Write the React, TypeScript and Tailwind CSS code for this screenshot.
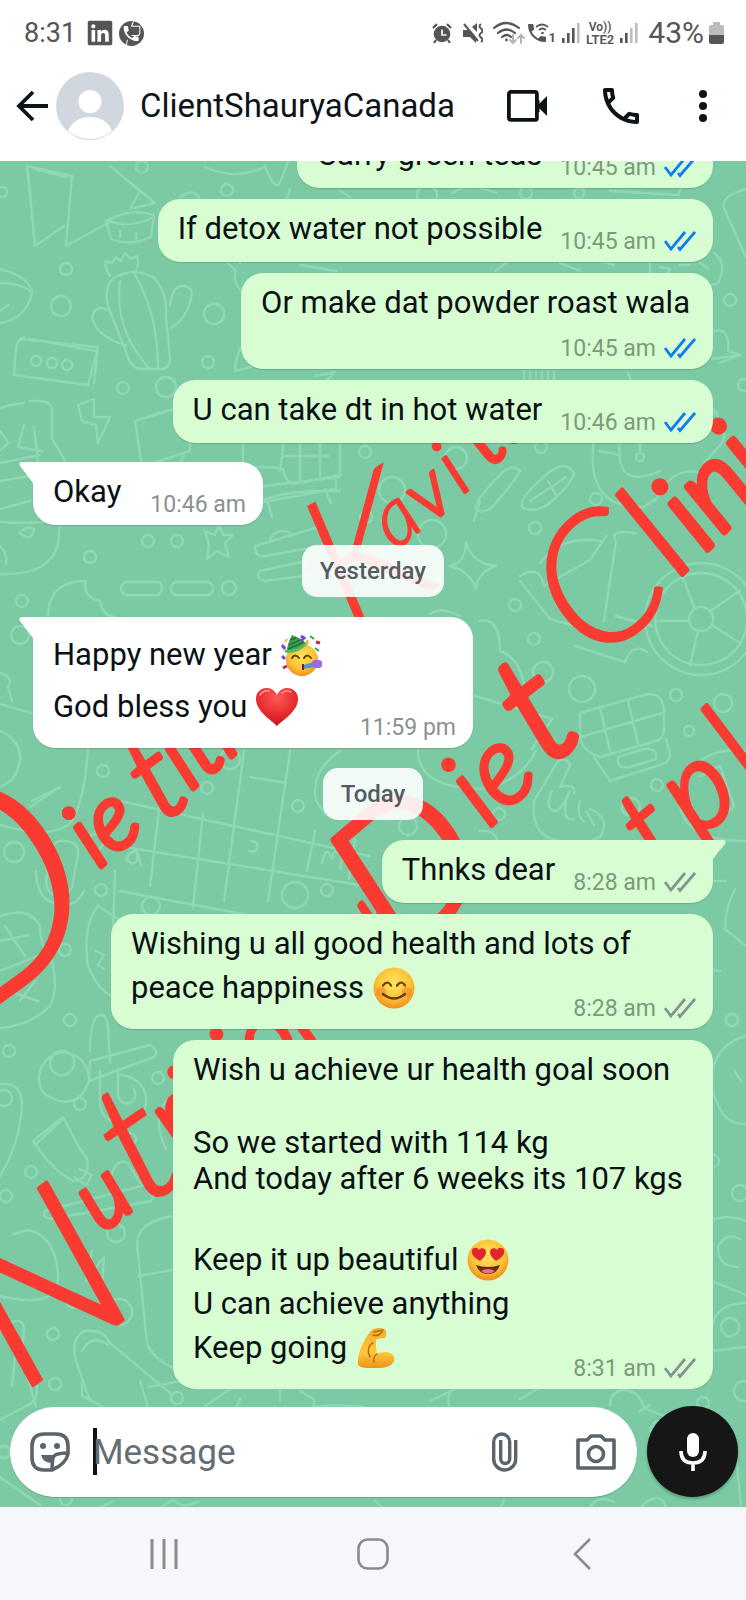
import React from "react";
import { FaLinkedin } from "react-icons/fa";

const PHONE =
  "M6.54 5c.06.89.21 1.76.45 2.59l-1.2 1.2c-.41-1.2-.67-2.47-.76-3.79h1.51m9.86 12.02c.85.24 1.72.39 2.6.45v1.49c-1.32-.09-2.59-.35-3.8-.75l1.2-1.19M7.5 3H4c-.55 0-1 .45-1 1 0 9.39 7.61 17 17 17 .55 0 1-.45 1-1v-3.49c0-.55-.45-1-1-1-1.24 0-2.45-.2-3.57-.57a.84.84 0 0 0-.31-.05c-.26 0-.51.1-.71.29l-2.2 2.2a15.149 15.149 0 0 1-6.59-6.59l2.2-2.2c.28-.28.36-.67.25-1.02A11.36 11.36 0 0 1 8.5 4c0-.55-.45-1-1-1z";
const PHONE_SOLID =
  "M6.6 10.8c1.4 2.8 3.8 5.1 6.6 6.6l2.2-2.2c.3-.3.7-.4 1-.2 1.1.4 2.3.6 3.6.6.6 0 1 .4 1 1V20c0 .6-.4 1-1 1C10.600 21 3 13.400 3 4c0-.6.4-1 1-1h3.500c.6 0 1 .4 1 1 0 1.200.2 2.400.6 3.600.1.3 0 .7-.2 1z";

type EmojiName = "party" | "heart" | "smile" | "hearteyes" | "muscle";

function FaceBase({ id }: { id: string }) {
  return (
    <>
      <defs>
        <radialGradient id={id} cx="50%" cy="38%" r="62%">
          <stop offset="0" stopColor="#ffe45e" />
          <stop offset="0.65" stopColor="#fdc236" />
          <stop offset="1" stopColor="#ef8d1c" />
        </radialGradient>
      </defs>
      <circle cx="21" cy="21" r="20.500" fill={`url(#${id})`} />
    </>
  );
}

function Emoji({ name }: { name: EmojiName }) {
  const common = "h-[42px] w-[42px] shrink-0";
  if (name === "party")
    return (
      <svg viewBox="0 0 42 42" className={common} role="img" aria-label="🥳">
        <defs>
          <radialGradient id="pf" cx="50%" cy="38%" r="62%">
            <stop offset="0" stopColor="#ffe45e" />
            <stop offset="0.65" stopColor="#fdc236" />
            <stop offset="1" stopColor="#ef8d1c" />
          </radialGradient>
        </defs>
        <circle cx="21" cy="26" r="16" fill="url(#pf)" />
        <path d="M11 1C9 5 6 11 6 17c6 2 14-2 20-7C22 6 17 3 11 1z" fill="#3f9f4c" />
        <path d="M9 6l6-2M8 11l11-5M7 15l16-7" stroke="#1f7434" strokeWidth="1.500" />
        <path d="M5 17c6 2 15-2 21-8" fill="none" stroke="#58bd5b" strokeWidth="3" strokeLinecap="round" />
        <path d="M11 24q3-5 7 0M23 24q3-5 7 0" fill="none" stroke="#6b3a12" strokeWidth="2" strokeLinecap="round" />
        <path d="M22 31l11-3v5l-10 2z" fill="#5a8fd8" />
        <rect x="31" y="26" width="10" height="8" rx="3" fill="#9b6be0" />
        <path d="M22 30v6" stroke="#5c2b10" strokeWidth="2" />
        <path d="M20 2l3 2-3 3M1 11l3 4M1 22l3 3" stroke="#7447d0" strokeWidth="3" fill="none" />
        <path d="M35 8l4 1M2 34l4-2" stroke="#d3214f" strokeWidth="3" />
        <path d="M29 2l4 3M34 14l4 3" stroke="#3ba04f" strokeWidth="2" />
        <path d="M27 6l-2 4M6 5l-2 3" stroke="#f1b52c" strokeWidth="2" />
      </svg>
    );
  if (name === "heart")
    return (
      <svg viewBox="0 0 42 42" className={common} role="img" aria-label="❤️">
        <defs>
          <radialGradient id="hh" cx="50%" cy="25%" r="75%">
            <stop offset="0" stopColor="#fb5a55" />
            <stop offset="0.6" stopColor="#e82c30" />
            <stop offset="1" stopColor="#c5131c" />
          </radialGradient>
        </defs>
        <path d="M21 40C15 34 0 25 0 13 0 6 5 2 11 2c5 0 8 3 10 7 2-4 5-7 10-7 6 0 11 4 11 11 0 12-15 21-21 27z" fill="url(#hh)" />
        <path d="M4 9q3-5 9-4M26 7q4-4 9-1" fill="none" stroke="#ff9a92" strokeWidth="1.500" strokeLinecap="round" />
      </svg>
    );
  if (name === "smile")
    return (
      <svg viewBox="0 0 42 42" className={common} role="img" aria-label="😊">
        <FaceBase id="sf" />
        <circle cx="8" cy="25" r="5" fill="#f4702a" opacity="0.45" />
        <circle cx="34" cy="25" r="5" fill="#f4702a" opacity="0.45" />
        <path d="M10 18.500q4.500-6 8 0M24 18.500q4.500-6 8 0" fill="none" stroke="#6b3a12" strokeWidth="2.200" strokeLinecap="round" />
        <path d="M10 27q11 9 22 0" fill="none" stroke="#6b3a12" strokeWidth="2.400" strokeLinecap="round" />
      </svg>
    );
  if (name === "hearteyes")
    return (
      <svg viewBox="0 0 42 42" className={common} role="img" aria-label="😍">
        <FaceBase id="he" />
        <path d="M13 22C8 19 4 16 5 11c1-3 6-3 7 0 2-3 7-2 7 2 0 4-3 6-6 9zM29 22c5-3 9-6 8-11-1-3-6-3-7 0-2-3-7-2-7 2 0 4 3 6 6 9z" fill="#e3242f" />
        <path d="M9 26q12 4 24 0-3 9-12 9T9 26z" fill="#6a2a12" />
        <path d="M14 32q7-4 14 0-7 5-14 0z" fill="#ef6d8c" />
      </svg>
    );
  return (
    <svg viewBox="0 0 42 42" className={common} role="img" aria-label="💪">
      <defs>
        <linearGradient id="ms" x1="0" y1="0" x2="0" y2="1">
          <stop offset="0" stopColor="#f2ac2a" />
          <stop offset="0.6" stopColor="#ffc93c" />
          <stop offset="1" stopColor="#ea9418" />
        </linearGradient>
      </defs>
      <path
        d="M14 5C17 1 23 0 28 2c3 1 3 6 1 9l-8 1c-2 2-1 8 0 15 5-3 15-3 17 3 2 7-6 11-15 11C14 41 6 42 2 38 1 27 7 14 14 5z"
        fill="url(#ms)"
      />
      <path d="M17 8q5 2 9-3M18 5l9-2M14 30c-3-5-2-12 3-14M21 27c-3 2-4 5-3 8" fill="none" stroke="#b56c10" strokeWidth="1.500" strokeLinecap="round" />
    </svg>
  );
}

function Ticks({ read }: { read: boolean }) {
  return (
    <svg
      viewBox="0 0 32 22"
      className={read ? "h-[22px] w-8 text-[#0f7df0]" : "h-[22px] w-8 text-[#86948f]"}
      fill="none"
      stroke="currentColor"
      strokeWidth="2.800"
      role="img"
      aria-label={read ? "Read" : "Delivered"}
    >
      <path d="M1 10l6 8L21 1M14 16l2 2.500L31 1" />
    </svg>
  );
}

type Line = { text: string; emoji?: EmojiName };
type Message = {
  id: number;
  lines: Line[];
  time: string;
  mine: boolean;
  read?: boolean;
  tail?: boolean;
  layout: "inline" | "below" | "overlap";
  box?: string;
};

function Bubble({ m }: { m: Message }) {
  const layout =
    m.layout === "inline"
      ? "flex items-end justify-between gap-[18px]"
      : m.layout === "below"
        ? "flex flex-col"
        : "grid";
  const text = m.layout === "overlap" ? "col-start-1 row-start-1 pr-3" : m.layout === "below" ? "pr-[6px]" : "";
  const meta =
    m.layout === "overlap"
      ? "col-start-1 row-start-1 self-end justify-self-end -mb-2"
      : m.layout === "below"
        ? "self-end mt-[14px] -mb-2"
        : "-mb-2";
  const side = m.mine ? "self-end bg-[#d8fdd2]" : "self-start bg-white";
  const corner = m.tail ? (m.mine ? "rounded-[22px] rounded-tr-none" : "rounded-[22px] rounded-tl-none") : "rounded-[22px]";
  return (
    <article
      className={`relative max-w-full pt-3 pb-[15px] pl-5 pr-[17px] shadow-[0_1px_1px_rgba(0,0,0,0.15)] ${side} ${corner} ${layout} ${m.box ?? ""}`}
    >
      {m.tail && !m.mine && (
        <svg viewBox="0 0 16 24" className="absolute top-0 -left-[14px] h-6 w-4" aria-hidden="true">
          <path d="M16 0H3Q-1 0 1 4L14 21V24H16z" fill="#fff" />
        </svg>
      )}
      {m.tail && m.mine && (
        <svg viewBox="0 0 16 24" className="absolute top-0 -right-[13px] h-6 w-4" aria-hidden="true">
          <path d="M0 0h13q4 0 2 4L3 19V24H0z" fill="#d8fdd2" />
        </svg>
      )}
      <div className={`text-[31px] leading-9 text-[#0a1014] ${text}`}>
        {m.lines.map((l, i) =>
          l.emoji ? (
            <p key={i} className="flex h-[52px] items-center gap-[9px] whitespace-nowrap">
              {l.text}
              <Emoji name={l.emoji} />
            </p>
          ) : (
            <p key={i} className={l.text ? "min-h-9" : "min-h-[37px]"}>
              {l.text}
            </p>
          ),
        )}
      </div>
      <div
        className={`flex shrink-0 items-center gap-2 text-[23px] leading-[27px] ${meta} ${m.mine ? "text-[#7b9a7c]" : "text-[#8b9093]"}`}
      >
        <time>{m.time}</time>
        {m.mine && <Ticks read={!!m.read} />}
      </div>
    </article>
  );
}

function Day({ children }: { children: React.ReactNode }) {
  return (
    <div className="my-[9px] self-center rounded-[15px] bg-white/90 px-[18px] py-3 text-[24px] leading-7 font-medium text-[#545b61]">
      {children}
    </div>
  );
}

const earlier: Message[] = [
  { id: 1, lines: [{ text: "Carry green teas" }], time: "10:45 am", mine: true, read: true, layout: "inline" },
  { id: 2, lines: [{ text: "If detox water not possible" }], time: "10:45 am", mine: true, read: true, layout: "inline" },
  { id: 3, lines: [{ text: "Or make dat powder roast wala" }], time: "10:45 am", mine: true, read: true, layout: "below" },
  { id: 4, lines: [{ text: "U can take dt in hot water" }], time: "10:46 am", mine: true, read: true, layout: "inline" },
  { id: 5, lines: [{ text: "Okay" }], time: "10:46 am", mine: false, tail: true, layout: "inline", box: "mt-2 w-[230px]" },
];
const yesterday: Message[] = [
  {
    id: 6,
    lines: [
      { text: "Happy new year", emoji: "party" },
      { text: "God bless you", emoji: "heart" },
    ],
    time: "11:59 pm",
    mine: false,
    tail: true,
    layout: "overlap",
    box: "w-[440px]",
  },
];
const today: Message[] = [
  { id: 7, lines: [{ text: "Thnks dear" }], time: "8:28 am", mine: true, tail: true, layout: "inline" },
  {
    id: 8,
    lines: [{ text: "Wishing u all good health and lots of" }, { text: "peace happiness", emoji: "smile" }],
    time: "8:28 am",
    mine: true,
    layout: "overlap",
    box: "w-[602px]",
  },
  {
    id: 9,
    lines: [
      { text: "Wish u achieve ur health goal soon" },
      { text: "" },
      { text: "So we started with 114 kg" },
      { text: "And today after 6 weeks its 107 kgs" },
      { text: "" },
      { text: "Keep it up beautiful", emoji: "hearteyes" },
      { text: "U can achieve anything" },
      { text: "Keep going", emoji: "muscle" },
    ],
    time: "8:31 am",
    mine: true,
    layout: "overlap",
    box: "w-[540px]",
  },
];

const dots: [number, number, number][] = [
  [142, 166, 6], [2, 191, 5], [227, 189, 6], [66, 268, 6], [61, 305, 10], [214, 313, 10], [208, 361, 6], [123, 387, 6],
  [166, 386, 10], [365, 451, 6], [366, 516, 6], [427, 194, 10], [526, 192, 6], [579, 192, 5], [730, 299, 6], [744, 384, 6],
  [541, 446, 6], [456, 457, 11], [392, 489, 13], [535, 527, 6], [432, 533, 14], [596, 498, 6], [148, 540, 6], [177, 540, 6],
  [90, 556, 6], [22, 600, 6], [229, 587, 7], [20, 634, 9], [515, 604, 6], [534, 638, 6], [543, 671, 10], [582, 688, 13],
  [676, 694, 6], [723, 702, 9], [689, 730, 5], [657, 784, 6], [631, 806, 9], [499, 813, 6], [230, 758, 10], [103, 770, 6],
  [207, 787, 6], [298, 805, 6], [14, 851, 10], [95, 841, 8], [101, 889, 6], [295, 894, 13], [327, 889, 6], [151, 905, 9],
  [408, 825, 9], [65, 949, 6], [70, 1019, 6], [9, 1050, 6], [158, 1077, 6], [4, 1097, 8], [80, 1103, 6], [130, 1138, 6],
  [31, 1171, 6], [6, 1195, 6], [116, 1232, 9], [73, 1301, 6], [119, 1311, 13], [53, 1333, 6], [732, 1019, 6], [713, 1160, 6],
  [740, 1192, 8], [55, 1383, 6], [177, 1397, 6], [703, 1402, 6], [66, 1498, 6], [4, 1451, 6], [744, 1390, 10],
];

const doodles = [
  "M27 165L35 245 64 225M27 165L72 175 66 245 108 222M35 168L66 176M110 165L155 202 130 208 140 190 110 165M35 245L28 170",
  "M106 220q25-14 48-6l-3 22q-20 10-40 2zM108 220q22 8 46-4M120 236v-6M136 238v-6",
  "M110 275q-6-8-4-15l6 2 4-6 5 4 4-8 6 6 6-3q3 10-3 17M142 368q-10 0-14-12L108 305q-4-20 6-28 20-12 40 0 14 14 12 40l4 40q0 10-8 11zM120 280q-6 50 30 88M134 272q24 40 24 95M170 305q2-20 12-20 12 0 9 12-4 20-20 30M126 344q-30-8-34-28 4-14 18-6",
  "M0 268q30 8 32 24-6 26-32 30M0 282q20 0 30 8M0 310l8-6",
  "M20 338l78 8-10 38-74-10 2-28q2-8 8-10M98 346l-4 36M30 338l66 12",
  "M78 404l16-6 0 18 16 0-12 26-2-18-14-4z",
  "M0 407q12-4 24-5M30 400q20-2 22 8v30q10 14 16 30M0 430q8 10 8 12L0 450M24 424l-6 22 24 4M34 426l4 34M0 462l40-8M0 480l35-6M0 508l30-8",
  "M135 420l45-14q6 0 10 10v34l-48 16zM184 455l-8 12",
  "M243 442v26q20-4 40 0 4 18 16 14l42-8M280 470l4-30M300 440v40M320 440v35M284 455h44M340 442v34l-84 10v16l80-14v-12M260 500q30-12 80-10M268 502l4 14M325 488l6 14",
  "M0 521q60 4 72-10M0 573q50 2 58-30 2-20 2-26M20 532q6-8 14-4-2 14-14 4M0 545q8 8 6 18",
  "M205 530l10 4 4-10 4 10 10 0-8 8 4 14-12-6-10 8 2-14z",
  "M255 545l60-18q14 6 6 18l-56 10q-10 2-10-10M260 570l46-10q-2 12 4 14l-44 6q-12-2-6-10M270 538q8-12 20-6",
  "M125 581h34q6 6 0 13h-34q-8-6 0-13M175 581h34q8 6 0 13h-34q-8-6 0-13",
  "M48 620q-2-40 38-40-4 16 14 20 2 14 14 16M0 703l34 10M0 672q14 4 8 14l4 14M88 748q-4 60-20 76-20 14-68 0",
  "M0 730q22 10 20 30-4 20-20 26M32 800l28-14M30 806l30-20",
  "M120 890l160 30M115 870l-2 62 150 30M160 800l-10 85M203 812l-10 95M244 750l-20 150M290 750l-22 150M120 800l250 55M118 845l260 42M250 776l36 6M315 830l-8 40M355 838l-6 40M135 850q-8 2-8 8 4 8 10 2v-10l4 14M255 828v2M251 840q8 0 6 8-2 4-8 2M322 862q4-20 10-4 2-14 10-2l-2 12",
  "M50 850q4-12 16-10 14 2 12 14l-6 32q-6 12-14 10-10-2-12-14zM36 870q0 30 24 34 16 2 24-14M55 905v20",
  "M98 905q-16 20-10 60 10 24 24 30M98 905l22 14M96 950l8 4-6 10 6 4",
  "M0 915q30-10 40 10 0 20 10 30 10 30 0 50-20 20-50 22M5 925l20 30M0 940l28-6M0 970l40-16M8 990l30 10M35 980l-15 20",
  "M90 1050q0-34 10-36 8 0 8 14l2 34M90 1060l60-16q10 6 4 12l-65 24q-8 24-30 20-22-6-20-26 6-24 28-22 20 4 22 26zM50 1062q2-14 14-12 12 2 10 14-4 12-16 10-8-4-8-12M100 1070v30q0 22 24 22 24-4 22-26-4-20-26-22M118 1068v26q2 10 12 8 8-4 4-14",
  "M0 1083q22-2 22 20-2 40-22 72M33 1140l30-24 16 30 8 12q4 20-14 22-20-10-40-40zM63 1118l-28 26M80 1168l12 6-6 10-12-8",
  "M45 1210l100-26q14 6 6 16l-100 18q-10-2-6-8M110 1180q4-24 18-18l12 20M166 1100q-14 20 0 48",
  "M173 1215q-36 6-36 28l10 100q6 14 26 24M138 1275l35-6M0 1295q60 14 58-20-2-40-30-46l-14 4M92 1250l-6 30 18-24-2 34",
  "M76 1360q-6-22 8-30 20-2 26 12l60 50M82 1350q10-18 26-6M90 1400l-14-40M0 1330q20-18 24-4l-2 30 14 50M16 1345l-4 40M36 1380q4 20-10 25l-26 14",
  "M140 1380l8 26M148 1386l34-6M205 1405l45-30M82 1380v15l24 12M300 1390l14 8 0 8 20-2 30 2M0 1476l40 28M98 1507l14-6M160 1507l12-8 12 6 14-4M280 1380v20",
  "M265 165q12 30 16 14l8-20M290 188l-12 40M340 190l10 6M205 166q30 14 60 0M180 196q14-10 20 2",
  "M228 262l8 8q-4 12 6 20M240 262v-6M300 264l36 6M245 340q-10 14-10 30l16-4M315 375l20-4-14 14",
  "M452 192q16-12 44 0M610 190l68 4 4-10M746 188q-30 8-20 24l20 44M520 250l-24 20M560 262l20 8M650 250v30q20 8 50 8l18-6q10-20-4-30M660 266l10 2-4 8M680 264l10 0M700 262l8 6M600 260l14 4",
  "M714 330q16-4 14 20l12 4-28 4M720 362l20-8M524 370v10M530 371v8M536 371v8M542 371v8M548 371v8M554 371v8M628 372l4 10",
  "M520 470q-8-8-18 2-30 30-26 36 6 6 16-2 20-22 28-36M480 500l-6 20M574 472q-8-14-26 0-30 26-26 34 14 8 30-6 20-18 22-28M530 500l36-24M548 480l8 14",
  "M594 438q-10 70 50 68l14-10M620 440q-6 50 40 30M600 450l20 4M640 452v-14M640 452a4 4 0 1 0 .1 0M690 430q16-30 28-14 10 14 4 26l-18 20M700 410q10-6 18 2M655 500q20-40 50-26",
  "M450 565q16-4 16-24 6 22 30 24-18 6-20 22-8-18-26-22M540 562q20-28 60-22M520 575q20-12 24 10l46-26 16-24M520 580l30 38 50 14M604 620l12-80q-8-12 20-8M616 615l36 10M575 645l50 16q8-20 22-10",
  "M701 562a56 56 0 1 0 .2 0M701 572a46 46 0 1 0 .2 0M701 606a12 12 0 1 0 .2 0M695 608l-14-36M710 610l30-20M690 620h-34M698 630l-8 34M712 624l28 18",
  "M580 712l64-18q18-4 20 14v20q0 10-8 12l-56 16q-20-6-20-24zM600 706l10 44M628 700l10 42M580 736l82-24M594 756l16 24 50-16q14-4 8-18l-2-8M618 756l26-8q14-2 12 10l-26 8q-14 2-12-10",
  "M560 840q-30-4-26-40l24-40q10-4 12 4l-10 22q16-4 14 6M552 790q-8 16 2 20 8 0 16-20M566 800q-4 20 8 18M580 800q-4 16 4 20M590 808q22 10 10 28-30 14-40 4M586 810l8 14",
  "M418 750q0 36 60 38 40-4 58-38M472 694l80 24-20 30M480 620q20-4 20 30 24 8 26 50M460 615q-20-10-30-2M340 750q-30 20-24 50l10 14",
  "M746 750q-50-6-66 40-6 50 66 50M700 775l20-10 14 40-12 10M735 888q-10 20-10 40l20 16M714 880l12 0M480 830q20-2 18 20",
  "M746 1035q-36 10-34 50 8 40 34 38M735 1070l6 10M746 1220q-20-8-35 0M740 1238q-14-8-22 8 0 20 20 20M712 1280l34 14M746 1302q-30 0-34 24M730 1317a9 9 0 1 0 .2 0M712 1350l34-4M640 940q10 30 46 26l34 4",
  "M240 1398a30 30 0 0 0 60 30M430 1400l34-16M450 1390a30 30 0 0 0 60 20M610 1405q0-16 16-16 14 2 18 18l30 12M640 1410l10-6M650 1430q6-20 20 0M520 1398l24-14M640 1507q20-20 26 0M375 1500l8 7M500 1507l4-8M590 1507q6-14 24-6M735 1445l6 60",
];

type Lettering = { text: string; x: number; y: number; angle: number; size: number; pen: number };
const lettering: Lettering[] = [
  { text: "D", x: -44, y: 1034, angle: -36, size: 290, pen: 2 },
  { text: "ie", x: 98, y: 868, angle: -40, size: 92, pen: 6 },
  { text: "t", x: 162, y: 822, angle: -36, size: 120, pen: 5 },
  { text: "itian", x: 190, y: 790, angle: -40, size: 92, pen: 6 },
  { text: "K", x: 350, y: 636, angle: -30, size: 190, pen: 0 },
  { text: "a", x: 396, y: 550, angle: -40, size: 80, pen: 2 },
  { text: "v", x: 430, y: 524, angle: -40, size: 80, pen: 3 },
  { text: "i", x: 462, y: 494, angle: -40, size: 80, pen: 3 },
  { text: "ta", x: 490, y: 468, angle: -46, size: 88, pen: 5 },
  { text: "D", x: 398, y: 960, angle: -40, size: 190, pen: 6 },
  { text: "ie", x: 488, y: 828, angle: -44, size: 110, pen: 5 },
  { text: "t", x: 546, y: 766, angle: -38, size: 156, pen: 7 },
  { text: "C", x: 594, y: 666, angle: -40, size: 180, pen: 2 },
  { text: "l", x: 678, y: 578, angle: -46, size: 140, pen: 5 },
  { text: "inic", x: 704, y: 552, angle: -46, size: 116, pen: 7 },
  { text: "t", x: 658, y: 868, angle: -40, size: 110, pen: 5 },
  { text: "p", x: 698, y: 838, angle: -40, size: 120, pen: 5 },
  { text: "l", x: 748, y: 776, angle: -44, size: 110, pen: 5 },
  { text: "N", x: 22, y: 1392, angle: -36, size: 220, pen: 4 },
  { text: "u", x: 102, y: 1232, angle: -38, size: 88, pen: 6 },
  { text: "t", x: 144, y: 1206, angle: -34, size: 170, pen: 3 },
  { text: "ritionist", x: 184, y: 1156, angle: -42, size: 104, pen: 5 },
];

function Wallpaper() {
  return (
    <svg
      viewBox="0 160 746 1347"
      preserveAspectRatio="xMidYMin slice"
      className="absolute inset-0 h-full w-full"
      aria-hidden="true"
    >
      <g fill="none" stroke="#8fd8b5" strokeWidth="2.400" strokeLinecap="round" strokeLinejoin="round">
        {dots.map(([x, y, r], i) => (
          <circle key={i} cx={x} cy={y} r={r} />
        ))}
        {doodles.map((d, i) => (
          <path key={i} d={d} />
        ))}
        <circle cx="36" cy="360" r="5" />
        <circle cx="52" cy="362" r="5" />
        <circle cx="67" cy="364" r="5" />
      </g>
      <g fill="#f93b32" stroke="#f93b32" strokeLinejoin="round" className="font-['Lato',sans-serif] font-light italic">
        {lettering.map((l, i) => (
          <text key={i} transform={`translate(${l.x} ${l.y}) rotate(${l.angle})`} fontSize={l.size} strokeWidth={l.pen}>
            {l.text}
          </text>
        ))}
      </g>
    </svg>
  );
}

function Signal({ level }: { level: number }) {
  return (
    <svg viewBox="0 0 18 20" className="h-5 w-[18px]" aria-hidden="true">
      {[0, 1, 2, 3].map((i) => (
        <rect key={i} x={i * 5} y={15 - i * 5} width="2.600" height={5 + i * 5} fill={i < level ? "#555" : "#bdbdbd"} />
      ))}
    </svg>
  );
}

function StatusBar() {
  return (
    <div className="flex h-[66px] shrink-0 items-center pr-[22px] pl-6 text-[#555]">
      <span className="mr-[10px] text-[27px] leading-8">8:31</span>
      <FaLinkedin className="mr-[5px] h-7 w-7" />
      <svg viewBox="0 0 24 24" className="h-[25px] w-[25px]" aria-hidden="true">
        <circle cx="12" cy="12" r="12" fill="#555" />
        <path d="M12 5h8v6q0 3-3 3h-5" fill="none" stroke="#fff" />
        <g transform="translate(2 2.500) scale(.8)">
          <path d={PHONE_SOLID} fill="#fff" />
        </g>
        <path d="M14 0l-2 5M8 18l-1 6" fill="none" stroke="#fff" />
      </svg>
      <div className="ml-auto flex items-center">
        <svg viewBox="0 0 20 20" className="h-5 w-5" fill="#555" aria-hidden="true">
          <circle cx="10" cy="11" r="8.300" />
          <path d="M10 6.500V12h4.500" fill="none" stroke="#fff" strokeWidth="1.700" />
          <path d="M1 5l4-4M19 5l-4-4M4 17l-2 3M16 17l2 3" stroke="#555" strokeWidth="2.200" />
        </svg>
        <svg viewBox="0 0 20 20" className="ml-[11px] h-5 w-5" fill="#555" aria-hidden="true">
          <path d="M0 7h5l8 8v5l-6-6H0zM9 4l5-4v9z" />
          <path d="M1 1l14 17" stroke="#555" strokeWidth="2" />
          <path d="M18 1q-3 2 0 4.500t0 4.500 0 4.500 0 4.500" fill="none" stroke="#555" strokeWidth="2" />
        </svg>
        <svg viewBox="0 0 32 24" className="ml-[10px] h-6 w-8" fill="none" stroke="#555" strokeWidth="2.200" strokeLinecap="round" aria-hidden="true">
          <path d="M1 7q12-10 25 0M5 12q9-7 17 0M9 16q5-4 9 0" />
          <circle cx="13.500" cy="19" r="1.400" fill="#555" stroke="none" />
          <path d="M20 14v7M17 19l3 3 3-3M28 22v-7M25 17l3-3 3 3" stroke="#b5b5b5" strokeWidth="2" />
        </svg>
        <svg viewBox="0 0 21 21" className="ml-[3px] h-[21px] w-[21px]" aria-hidden="true">
          <g transform="translate(-3 -2)">
            <path d={PHONE_SOLID} fill="#555" />
          </g>
          <path d="M8 4q6-5 12 0M11 7q3-3 7 0" fill="none" stroke="#555" strokeWidth="1.800" />
          <circle cx="14.500" cy="10" r="1.300" fill="#555" />
        </svg>
        <span className="mt-[10px] text-[13px] leading-3 font-bold">1</span>
        <span className="ml-[6px]">
          <Signal level={3} />
        </span>
        <span className="ml-[6px] flex flex-col items-center text-[13px] leading-[13px] font-semibold">
          <span className="h-3 text-[12px] leading-3">Vo))</span>
          <span>LTE2</span>
        </span>
        <span className="ml-[6px]">
          <Signal level={2} />
        </span>
        <span className="ml-[10px] text-[30px] leading-8">43%</span>
        <svg viewBox="0 0 15 22" className="ml-[5px] h-[22px] w-[15px]" aria-hidden="true">
          <path d="M4 0h7v3h2q2 0 2 2v9H0V5q0-2 2-2h2z" fill="#bcbcbc" />
          <path d="M0 13h15v7q0 2-2 2H2q-2 0-2-2z" fill="#555" />
        </svg>
      </div>
    </div>
  );
}

function Header() {
  return (
    <header className="flex h-[95px] shrink-0 items-center bg-white pr-[35px] pb-[15px] pl-4 text-[#0d1418]">
      <button type="button" aria-label="Back" className="mr-2">
        <svg viewBox="0 0 32 32" className="h-8 w-8" fill="none" stroke="currentColor" strokeWidth="3.800">
          <path d="M32 16H4M17 2L3 16l14 14" />
        </svg>
      </button>
      <svg viewBox="0 0 68 68" className="h-[68px] w-[68px]" role="img" aria-label="Profile photo">
        <circle cx="34" cy="34" r="34" fill="#d0d7df" />
        <circle cx="34" cy="29.500" r="11.500" fill="#fff" />
        <path d="M12 59Q18 45 34 45t22 14Q46 67 34 67T12 59z" fill="#fff" />
      </svg>
      <h1 className="ml-4 flex-1 truncate text-[33px] leading-10">ClientShauryaCanada</h1>
      <button type="button" aria-label="Video call" className="mr-[54px]">
        <svg viewBox="0 0 40 32" className="h-8 w-10">
          <rect x="1.900" y="1.900" width="28" height="28" rx="2" fill="none" stroke="currentColor" strokeWidth="3.800" />
          <path d="M30 16l10-10v20z" fill="currentColor" />
          <path d="M31 10v12" stroke="currentColor" strokeWidth="3" />
        </svg>
      </button>
      <button type="button" aria-label="Voice call" className="mr-[54px]">
        <svg viewBox="2 2 20 20" className="h-10 w-10" fill="currentColor">
          <path d={PHONE} />
        </svg>
      </button>
      <button type="button" aria-label="More options" className="flex w-4 justify-center">
        <svg viewBox="0 0 8 32" className="h-8 w-2" fill="currentColor">
          <circle cx="4" cy="4" r="4" />
          <circle cx="4" cy="16" r="4" />
          <circle cx="4" cy="28" r="4" />
        </svg>
      </button>
    </header>
  );
}

function Composer() {
  return (
    <form className="relative flex items-center gap-[10px] pt-[17px] pr-2 pb-[10px] pl-[10px]" onSubmit={(e) => e.preventDefault()}>
      <div className="flex h-[90px] min-w-0 flex-1 items-center rounded-full bg-white pr-[21px] pl-5 text-[#5b646b] shadow-[0_1px_1px_rgba(0,0,0,0.18)]">
        <button type="button" aria-label="Stickers">
          <svg viewBox="0 0 40 40" className="h-10 w-10" fill="none" stroke="currentColor" strokeWidth="3.600" strokeLinejoin="round">
            <path d="M22 38H14Q2 38 2 26V14Q2 2 14 2h12q12 0 12 12v8q-2 10-16 16z" />
            <path d="M37 21q-13 0-14 5-1 4-1 11" />
            <circle cx="13" cy="14" r="3" fill="currentColor" stroke="none" />
            <circle cx="27" cy="14" r="3" fill="currentColor" stroke="none" />
            <path d="M11 23h14q-4 3-3 8-9 0-11-8z" fill="currentColor" stroke="none" />
          </svg>
        </button>
        <span className="ml-[23px] h-[47px] w-1 bg-[#111]" aria-hidden="true" />
        <input
          type="text"
          aria-label="Message"
          placeholder="Message"
          className="-ml-1 h-12 min-w-0 flex-1 bg-transparent pt-1 text-[35px] text-[#0a1014] outline-none placeholder:text-[#656d73]"
        />
        <button type="button" aria-label="Attach" className="mr-[58px]">
          <svg viewBox="0 0 26 40" className="h-10 w-[26px]" fill="none" stroke="currentColor" strokeWidth="3.400">
            <path d="M23.700 8v19a11 11 0 0 1-22 0V10a8 8 0 0 1 16 0v17a4.500 4.500 0 0 1-9 0V8" />
          </svg>
        </button>
        <button type="button" aria-label="Camera">
          <svg viewBox="0 0 40 36" className="h-9 w-10" fill="none" stroke="currentColor" strokeWidth="3.600" strokeLinejoin="round">
            <path d="M2 6h9l4-4h10l4 4h9v28H2z" />
            <circle cx="20" cy="20" r="7.500" />
          </svg>
        </button>
      </div>
      <button
        type="button"
        aria-label="Record voice message"
        className="flex h-[91px] w-[91px] shrink-0 items-center justify-center rounded-full bg-[#161616] text-white shadow-[0_2px_3px_rgba(0,0,0,0.25)]"
      >
        <svg viewBox="0 0 28 38" className="h-[38px] w-7">
          <rect x="8" y="0" width="12" height="24" rx="6" fill="currentColor" />
          <path d="M2 18q0 12 12 12t12-12M14 30v8" fill="none" stroke="currentColor" strokeWidth="3.600" />
        </svg>
      </button>
    </form>
  );
}

function SystemNav() {
  return (
    <nav className="grid h-[93px] shrink-0 grid-cols-3 place-items-center bg-[#f6f7fa] px-[60px] text-[#8b8b8d]">
      <button type="button" aria-label="Recent apps">
        <svg viewBox="0 0 30 30" className="h-[30px] w-[30px]" stroke="currentColor" strokeWidth="3">
          <path d="M3 0v30M15 0v30M27 0v30" />
        </svg>
      </button>
      <button type="button" aria-label="Home">
        <svg viewBox="0 0 32 32" className="h-8 w-8" fill="none" stroke="currentColor" strokeWidth="2.600">
          <rect x="1.500" y="1.500" width="29" height="29" rx="9" />
        </svg>
      </button>
      <button type="button" aria-label="Back">
        <svg viewBox="0 0 18 32" className="h-8 w-[18px]" fill="none" stroke="currentColor" strokeWidth="2.600">
          <path d="M17 1L2 16l15 15" />
        </svg>
      </button>
    </nav>
  );
}

export default function App() {
  return (
    <div className="flex h-screen flex-col bg-white font-['Roboto',sans-serif]">
      <StatusBar />
      <Header />
      <main className="relative flex min-h-0 flex-1 flex-col overflow-hidden bg-[#7bcaa3]">
        <Wallpaper />
        <section className="relative flex min-h-0 flex-1 flex-col justify-end gap-[11px] overflow-hidden px-[33px]" aria-label="Messages">
          {earlier.map((m) => (
            <Bubble key={m.id} m={m} />
          ))}
          <Day>Yesterday</Day>
          {yesterday.map((m) => (
            <Bubble key={m.id} m={m} />
          ))}
          <Day>Today</Day>
          {today.map((m) => (
            <Bubble key={m.id} m={m} />
          ))}
        </section>
        <Composer />
      </main>
      <SystemNav />
    </div>
  );
}
